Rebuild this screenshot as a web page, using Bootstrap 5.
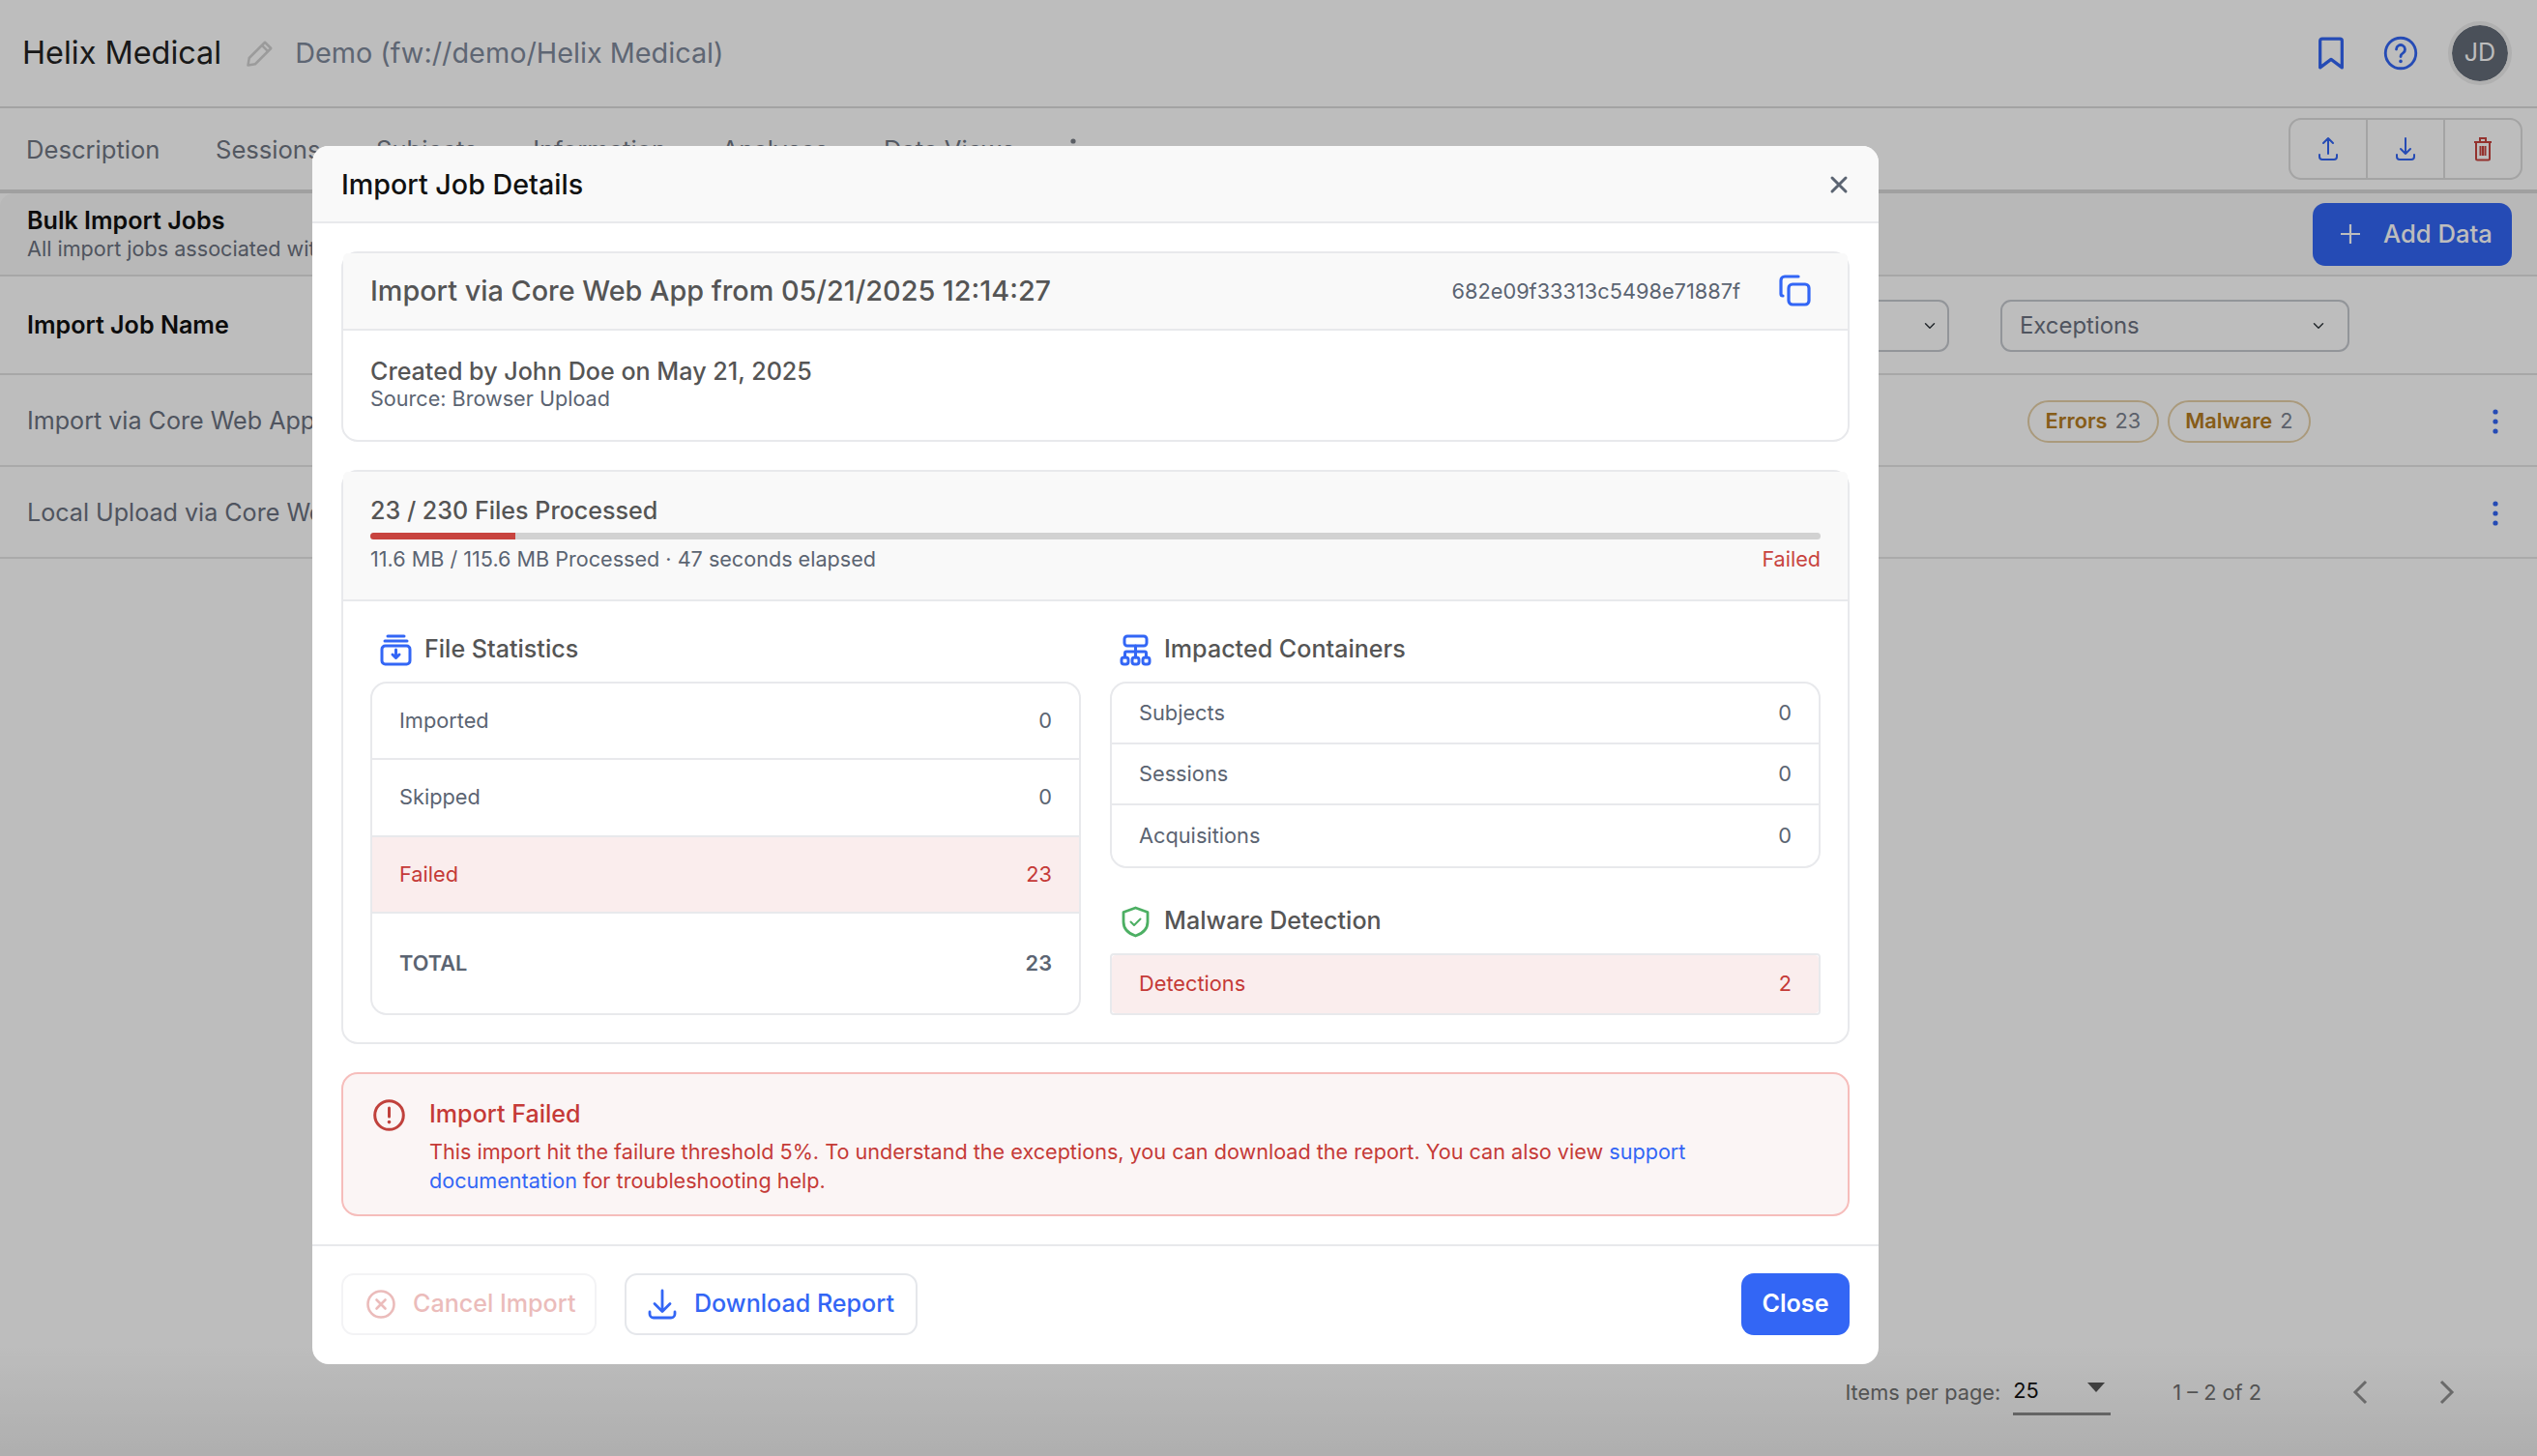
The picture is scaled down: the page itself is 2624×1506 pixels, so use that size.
<!DOCTYPE html>
<html lang="en">
<head>
<meta charset="utf-8">
<title>Import Job Details</title>
<link href="https://cdn.jsdelivr.net/npm/bootstrap@5.3.0/dist/css/bootstrap.min.css" rel="stylesheet">
<style>
html,body{height:100%;}
body{font-family:Inter,"Noto Sans",sans-serif;font-size:21.76px;color:#4b5563;background:#fff;overflow:hidden;}
svg{display:block;flex:none;}
.hx-top{height:112px;padding:0 26px 0 23px;border-bottom:2px solid #dcdcdc;}
.hx-brand{font-size:32.4px;font-weight:400;color:#222;}
.hx-path{font-size:28.8px;color:#7f8a9c;}
.hx-pencil{margin:0 21px 0 25px;}
.hx-ic-top{color:#3366f5;}
.hx-mark{margin-right:37px;}
.hx-avatar{width:66px;height:66px;border-radius:50%;border:4px solid #eee;background:#646c78;background-clip:padding-box;color:#fff;font-size:25.1px;margin-left:31px;}
.hx-tabs{height:88px;padding:0 15px 0 27px;border-bottom:4px solid #d8d8d8;}
.hx-tab{font-size:25.6px;color:#707784;margin-right:57.5px;padding-top:3px;}
.hx-dots{margin-top:3px;}
.hx-tool{height:64px;width:242px;border:2px solid #ddd;border-radius:13px;}
.hx-tool>div{flex:1;border-right:2px solid #ddd;}
.hx-tool>div:last-child{border-right:0;}
.hx-bulk{height:86px;padding:0 26px 0 28px;background:#f9f9f9;border-bottom:2px solid #e2e2e2;border-top-left-radius:14px;}
.hx-bulk-t{font-size:25.1px;font-weight:600;color:#111;line-height:30px;}
.hx-bulk-s{font-size:21.6px;color:#6b7280;line-height:28px;}
.hx-add{height:65px;width:206px;border-radius:13px;background:#3366f5;border:0;color:#fff;font-size:25.6px;font-weight:500;padding:0 0 0 28px;gap:23px;}
.hx-filter{height:102px;padding:2px 194px 0 28px;border-bottom:2px solid #e2e2e2;}
.hx-filter-t{font-size:25.1px;font-weight:600;color:#111;}
.hx-select{height:54px;font-size:23.9px;color:#6b7280;border:2px solid #c6c9cf;border-radius:11px;padding:0 18px;background-size:16px 12px;background-position:right 22px center;}
.hx-s1{width:320px;margin-right:53px;background-position:right 10px center;}
.hx-s2{width:361px;}
.hx-row{height:95px;padding:2px 40px 0 28px;border-bottom:2px solid #e6e6e6;font-size:25.1px;color:#6b7280;}
.hx-chip{height:44px;padding:0 16.5px;border:2px solid #e6d0a8;border-radius:22px;font-size:21.76px;color:#7d8491;margin-left:9px;}
.hx-chip b{color:#b57c22;font-weight:600;margin-right:8px;}
.hx-kebab{margin-left:188px;}
.hx-pager{height:126px;padding:0 84px 6px 0;font-size:21.76px;color:#707070;background:linear-gradient(to bottom,#fff 10%,#ececec 100%);}
.hx-perpage{width:101px;height:48px;margin:0 64px 0 13px;color:#111;border-bottom:3px solid #888;}
.hx-tri{width:0;height:0;border-left:9px solid transparent;border-right:9px solid transparent;border-top:10px solid #555;margin:0 6px 8px 0;}
.hx-prev{margin-left:93px;}
.hx-next{margin-left:72px;}
.hx-shade{--bs-backdrop-opacity:.26;--bs-backdrop-bg:#000;}
.hx-dialog{max-width:none;width:1620px;margin:151px 0 0 323px;}
.hx-content{height:1260px;border:0;border-radius:17px;background:#fff;color:#4b5563;}
.hx-head{height:80px;padding:2px 31px 0 30px;background:#f9f9f9;border-bottom:2px solid #e8e9ec;border-radius:17px 17px 0 0;}
.hx-title{font-size:28.7px;font-weight:500;color:#111;}
.hx-x{color:#5b6472;background:none;border:0;padding:0;}
.hx-body{padding:29px 30px 29px 30px;flex:none;}
.hx-card{border:2px solid #e8e9ec;border-radius:17px;background:#fff;margin-bottom:29px;}
.hx-card-h{background:#f9f9f9;border-bottom:2px solid #e8e9ec;border-radius:15px 15px 0 0;padding:0 28px;}
.hx-h1{height:80px;padding-right:38px;}
.hx-job{font-size:28.8px;font-weight:500;color:#555;}
.hx-id{font-size:21.76px;color:#5b6472;margin-right:40px;}
.hx-copy{margin-top:-2px;}
.hx-b1{height:113px;padding:27px 28px 0;}
.hx-by{font-size:25.1px;font-weight:500;color:#555;line-height:30px;}
.hx-src{font-size:21.6px;color:#5b6472;line-height:27px;}
.hx-h2{height:134px;padding-top:24.5px;}
.hx-prog-t{font-size:25.1px;font-weight:500;color:#555;line-height:30px;}
.hx-prog{height:7px;margin:8px 0 6px;background:#d2d2d2;border-radius:4px;--bs-progress-bar-bg:#c8443f;}
.hx-prog-s{font-size:21.6px;color:#5b6472;line-height:28px;}
.hx-red{color:#c8443f;}
.hx-b2{padding:30px 28px 28px;}
.hx-cols{--bs-gutter-x:30px;}
.hx-sec{height:40px;margin-bottom:12.5px;padding-left:10px;font-size:25.1px;font-weight:500;color:#555;gap:13px;}
.hx-list{border:2px solid #e8e9ec;border-radius:17px;overflow:hidden;--bs-list-group-border-width:0;}
.hx-li{display:flex;align-items:center;justify-content:space-between;font-size:21.76px;color:#5b6472;}
.hx-li.list-group-item{border-width:0 0 2px;border-color:#e8e9ec;padding:0 28px;}
.hx-li.list-group-item:last-child{border-bottom-width:0;}
.hx-t79{height:79.5px;}
.hx-t106{height:103px;font-weight:600;}
.hx-t63{height:63px;}
.hx-t60{height:60.5px;}
.hx-square{border-radius:4px;}
.hx-fail.list-group-item{background:#faeded;color:#c53a37;}
.hx-gap{margin-top:35.5px;}
.hx-alert{height:149px;margin:0;padding:26px 30px 0 31px;background:#fbf5f5;border:2px solid #f6bdbb;border-radius:17px;color:#c53a37;gap:25px;}
.hx-alert-t{font-size:25.1px;font-weight:500;line-height:30px;margin-bottom:9px;}
.hx-alert-p{font-size:21.62px;line-height:30px;}
.hx-alert-p a{color:#3366f5;text-decoration:none;}
.hx-foot{--bs-modal-footer-gap:0;padding:28px 30px 0 30px;border-top:2px solid #e8e9ec;height:123px;}
.hx-btn{height:64px;font-size:25.1px;font-weight:500;border-radius:13px;background:#fff;gap:18px;white-space:nowrap;}
.hx-cancel,.hx-cancel:disabled{width:264px;padding:0 24px;border:2px solid #f3f3f5;color:#ebbcbb;opacity:1;background:#fff;}
.hx-dl{width:303px;padding:0 22px;border:2px solid #e5e7eb;color:#3366f5;margin-left:29px;}
.hx-close{width:112px;height:64px;border-radius:13px;background:#3366f5;border:0;color:#fff;font-size:25.1px;font-weight:600;padding:0;}
</style>
</head>
<body>
<div class="d-flex flex-column vh-100">
  <header class="hx-top d-flex align-items-center flex-none">
    <span class="hx-brand">Helix Medical</span>
    <svg class="hx-pencil" width="30" height="30" viewBox="0 0 24 24" fill="none" stroke="#d2d2d2" stroke-width="2" stroke-linejoin="round"><path d="M16 3l5 5L8 21l-6 1 1-6z"/><path d="M13.500 5.500l5 5"/></svg>
    <span class="hx-path">Demo (fw://demo/Helix Medical)</span>
    <div class="ms-auto d-flex align-items-center hx-ic-top">
      <svg class="hx-mark" width="34" height="36" viewBox="0 0 24 25" fill="none" stroke="currentColor" stroke-width="2.300" stroke-linejoin="round"><path d="M4 3.500a1.500 1.500 0 0 1 1.500-1.500h13A1.500 1.500 0 0 1 20 3.500V23l-8-6-8 6z"/></svg>
      <svg width="36" height="36" viewBox="0 0 24 24" fill="none" stroke="currentColor" stroke-width="1.900" stroke-linecap="round"><circle cx="12" cy="12" r="10.500"/><path d="M9 9.300a3 3 0 1 1 4.600 2.600c-1 .6-1.600 1.200-1.600 2.400"/><path d="M12 17.600v.1" stroke-width="2.400"/></svg>
      <div class="hx-avatar d-flex align-items-center justify-content-center">JD</div>
    </div>
  </header>
  <nav class="hx-tabs d-flex align-items-center flex-none">
    <span class="hx-tab">Description</span><span class="hx-tab">Sessions</span><span class="hx-tab">Subjects</span><span class="hx-tab">Information</span><span class="hx-tab">Analyses</span><span class="hx-tab">Data Views</span>
    <svg class="hx-dots" width="6" height="26" viewBox="0 0 6 26" fill="#7a7f88"><circle cx="3" cy="3" r="2.600"/><circle cx="3" cy="13" r="2.600"/><circle cx="3" cy="23" r="2.600"/></svg>
    <div class="hx-tool ms-auto d-flex">
      <div class="d-flex align-items-center justify-content-center"><svg width="24" height="26" viewBox="0 0 24 26" fill="none" stroke="#3366f5" stroke-width="2" stroke-linecap="round" stroke-linejoin="round"><path d="M12 18V2M7 7l5-5 5 5M3 19v2a3 3 0 0 0 3 3h12a3 3 0 0 0 3-3v-2"/></svg></div>
      <div class="d-flex align-items-center justify-content-center"><svg width="24" height="26" viewBox="0 0 24 26" fill="none" stroke="#3366f5" stroke-width="2" stroke-linecap="round" stroke-linejoin="round"><path d="M12 2v16M7 13l5 5 5-5M3 19v2a3 3 0 0 0 3 3h12a3 3 0 0 0 3-3v-2"/></svg></div>
      <div class="d-flex align-items-center justify-content-center"><svg width="22" height="26" viewBox="0 0 22 26" fill="none" stroke="#c8443f" stroke-width="2"><path d="M2 6h18M8 6V2h6v4M4 6v17a1.500 1.500 0 0 0 1.500 1.500h11A1.500 1.500 0 0 0 18 23V6M8.500 10v10M11 10v10M13.500 10v10"/></svg></div>
    </div>
  </nav>
  <section class="hx-bulk d-flex align-items-center justify-content-between flex-none">
    <div><div class="hx-bulk-t">Bulk Import Jobs</div><div class="hx-bulk-s">All import jobs associated with this project</div></div>
    <button class="btn hx-add d-flex align-items-center"><svg width="22" height="22" viewBox="0 0 22 22" stroke="currentColor" stroke-width="2.200"><path d="M11 1v20M1 11h20"/></svg>Add Data</button>
  </section>
  <section class="hx-filter d-flex align-items-center flex-none">
    <span class="hx-filter-t me-auto">Import Job Name</span>
    <select class="form-select hx-select hx-s1"><option>Status</option></select>
    <select class="form-select hx-select hx-s2"><option>Exceptions</option></select>
  </section>
  <section class="hx-row d-flex align-items-center flex-none">
    <span class="me-auto">Import via Core Web App from 05/21/2025 12:14:27</span>
    <span class="hx-chip d-flex align-items-center"><b>Errors</b>23</span>
    <span class="hx-chip d-flex align-items-center"><b>Malware</b>2</span>
    <svg class="hx-kebab" width="6" height="26" viewBox="0 0 6 26" fill="#3366f5"><circle cx="3" cy="3" r="2.600"/><circle cx="3" cy="13" r="2.600"/><circle cx="3" cy="23" r="2.600"/></svg>
  </section>
  <section class="hx-row d-flex align-items-center flex-none">
    <span class="me-auto">Local Upload via Core Web App from 05/20/2025 09:41:02</span>
    <svg width="6" height="26" viewBox="0 0 6 26" fill="#3366f5"><circle cx="3" cy="3" r="2.600"/><circle cx="3" cy="13" r="2.600"/><circle cx="3" cy="23" r="2.600"/></svg>
  </section>
  <div class="flex-grow-1"></div>
  <footer class="hx-pager d-flex align-items-center justify-content-end flex-none">
    <span>Items per page:</span>
    <div class="hx-perpage d-flex align-items-center justify-content-between"><span>25</span><span class="hx-tri"></span></div>
    <span>1 – 2 of 2</span>
    <svg class="hx-prev" width="18" height="26" viewBox="0 0 18 26" fill="none" stroke="#8f8f8f" stroke-width="3"><path d="M15 2L4 13l11 11"/></svg>
    <svg class="hx-next" width="18" height="26" viewBox="0 0 18 26" fill="none" stroke="#8f8f8f" stroke-width="3"><path d="M3 2l11 11L3 24"/></svg>
  </footer>
</div>

<div class="modal-backdrop show hx-shade"></div>
<div class="modal d-block">
  <div class="modal-dialog hx-dialog">
    <div class="modal-content hx-content">
      <div class="modal-header hx-head d-flex justify-content-between align-items-center">
        <h5 class="modal-title hx-title">Import Job Details</h5>
        <button class="hx-x" aria-label="Close"><svg width="20" height="20" viewBox="0 0 20 20" stroke="currentColor" stroke-width="3" stroke-linecap="round"><path d="M3 3l14 14M17 3L3 17"/></svg></button>
      </div>
      <div class="modal-body hx-body">
        <div class="card hx-card">
          <div class="card-header hx-card-h hx-h1 d-flex align-items-center">
            <span class="hx-job me-auto">Import via Core Web App from 05/21/2025 12:14:27</span>
            <span class="hx-id">682e09f33313c5498e71887f</span>
            <svg class="hx-copy" width="33" height="33" viewBox="0 0 33 33" fill="none" stroke="#3366f5" stroke-width="3.200" stroke-linecap="round" stroke-linejoin="round"><path d="M20 2H6a4 4 0 0 0-4 4v14a2 2 0 0 0 2 2"/><rect x="10" y="10" width="21" height="21" rx="4"/></svg>
          </div>
          <div class="card-body hx-b1">
            <div class="hx-by">Created by John Doe on May 21, 2025</div>
            <div class="hx-src">Source: Browser Upload</div>
          </div>
        </div>

        <div class="card hx-card">
          <div class="card-header hx-card-h hx-h2">
            <div class="hx-prog-t">23 / 230 Files Processed</div>
            <div class="progress hx-prog"><div class="progress-bar" style="width:10%"></div></div>
            <div class="hx-prog-s d-flex justify-content-between"><span>11.6 MB / 115.6 MB Processed · 47 seconds elapsed</span><span class="hx-red">Failed</span></div>
          </div>
          <div class="card-body hx-b2">
            <div class="row hx-cols">
              <div class="col-6">
                <div class="hx-sec d-flex align-items-center">
                  <svg width="33" height="33" viewBox="0 0 33 33" fill="none" stroke="#3366f5" stroke-width="3" stroke-linecap="round" stroke-linejoin="round"><path d="M8 2h17M5 7h23"/><rect x="2" y="12" width="29" height="19" rx="3.500"/><path d="M16.500 16v8M13 21l3.500 3.500L20 21"/></svg>
                  <span>File Statistics</span>
                </div>
                <ul class="list-group hx-list">
                  <li class="list-group-item hx-li hx-t79"><span>Imported</span><span>0</span></li>
                  <li class="list-group-item hx-li hx-t79"><span>Skipped</span><span>0</span></li>
                  <li class="list-group-item hx-li hx-t79 hx-fail"><span>Failed</span><span>23</span></li>
                  <li class="list-group-item hx-li hx-t106"><span>TOTAL</span><span>23</span></li>
                </ul>
              </div>
              <div class="col-6">
                <div class="hx-sec d-flex align-items-center">
                  <svg width="33" height="33" viewBox="0 0 33 33" fill="none" stroke="#3366f5" stroke-width="3" stroke-linecap="round" stroke-linejoin="round"><rect x="5" y="2" width="23" height="10" rx="3"/><path d="M16.500 12v12M5.500 24v-4.500a1.500 1.500 0 0 1 1.500-1.500h19a1.500 1.500 0 0 1 1.500 1.500V24"/><rect x="2" y="24" width="7" height="7" rx="2.500"/><rect x="13" y="24" width="7" height="7" rx="2.500"/><rect x="24" y="24" width="7" height="7" rx="2.500"/></svg>
                  <span>Impacted Containers</span>
                </div>
                <ul class="list-group hx-list">
                  <li class="list-group-item hx-li hx-t63"><span>Subjects</span><span>0</span></li>
                  <li class="list-group-item hx-li hx-t63"><span>Sessions</span><span>0</span></li>
                  <li class="list-group-item hx-li hx-t63"><span>Acquisitions</span><span>0</span></li>
                </ul>
                <div class="hx-sec hx-gap d-flex align-items-center">
                  <svg width="33" height="33" viewBox="0 0 33 33" fill="none" stroke-linecap="round" stroke-linejoin="round"><path d="M16.500 2l12.500 4.500v10c0 7-5 12-12.500 14.500C9 28.500 4 23.500 4 16.500v-10z" stroke="#4caf63" stroke-width="2.800"/><path d="M11.500 16.500l3.500 3.500 6.500-6.500" stroke="#4caf63" stroke-width="2"/></svg>
                  <span>Malware Detection</span>
                </div>
                <ul class="list-group hx-list hx-square">
                  <li class="list-group-item hx-li hx-t60 hx-fail"><span>Detections</span><span>2</span></li>
                </ul>
              </div>
            </div>
          </div>
        </div>

        <div class="alert hx-alert d-flex align-items-start" role="alert">
          <svg width="33" height="33" viewBox="0 0 33 33" fill="none" stroke="#c0413c" stroke-width="3" stroke-linecap="round"><circle cx="16.500" cy="16.500" r="14.800"/><path d="M16.500 9v9"/><path d="M16.500 23.500v.1" stroke-width="3.600"/></svg>
          <div>
            <div class="hx-alert-t">Import Failed</div>
            <div class="hx-alert-p">This import hit the failure threshold 5%. To understand the exceptions, you can download the report. You can also view <a href="#">support<br>documentation</a> for troubleshooting help.</div>
          </div>
        </div>
      </div>
      <div class="modal-footer hx-foot d-flex justify-content-start align-items-start">
        <button class="btn hx-btn hx-cancel d-flex align-items-center" disabled><svg width="30" height="30" viewBox="0 0 30 30" fill="none" stroke="#ebbcbb" stroke-width="2.600" stroke-linecap="round"><circle cx="15" cy="15" r="13.500"/><path d="M10.500 10.500l9 9M19.500 10.500l-9 9"/></svg>Cancel Import</button>
        <button class="btn hx-btn hx-dl d-flex align-items-center"><svg width="30" height="32" viewBox="0 0 30 32" fill="none" stroke="#3366f5" stroke-width="2.800" stroke-linecap="round" stroke-linejoin="round"><path d="M15 2v21M7 15.500l8 8 8-8M2 24v2a4 4 0 0 0 4 4h18a4 4 0 0 0 4-4v-2"/></svg>Download Report</button>
        <button class="btn hx-close ms-auto">Close</button>
      </div>
    </div>
  </div>
</div>
<script src="https://cdn.jsdelivr.net/npm/bootstrap@5.3.0/dist/js/bootstrap.bundle.min.js"></script>
</body>
</html>
